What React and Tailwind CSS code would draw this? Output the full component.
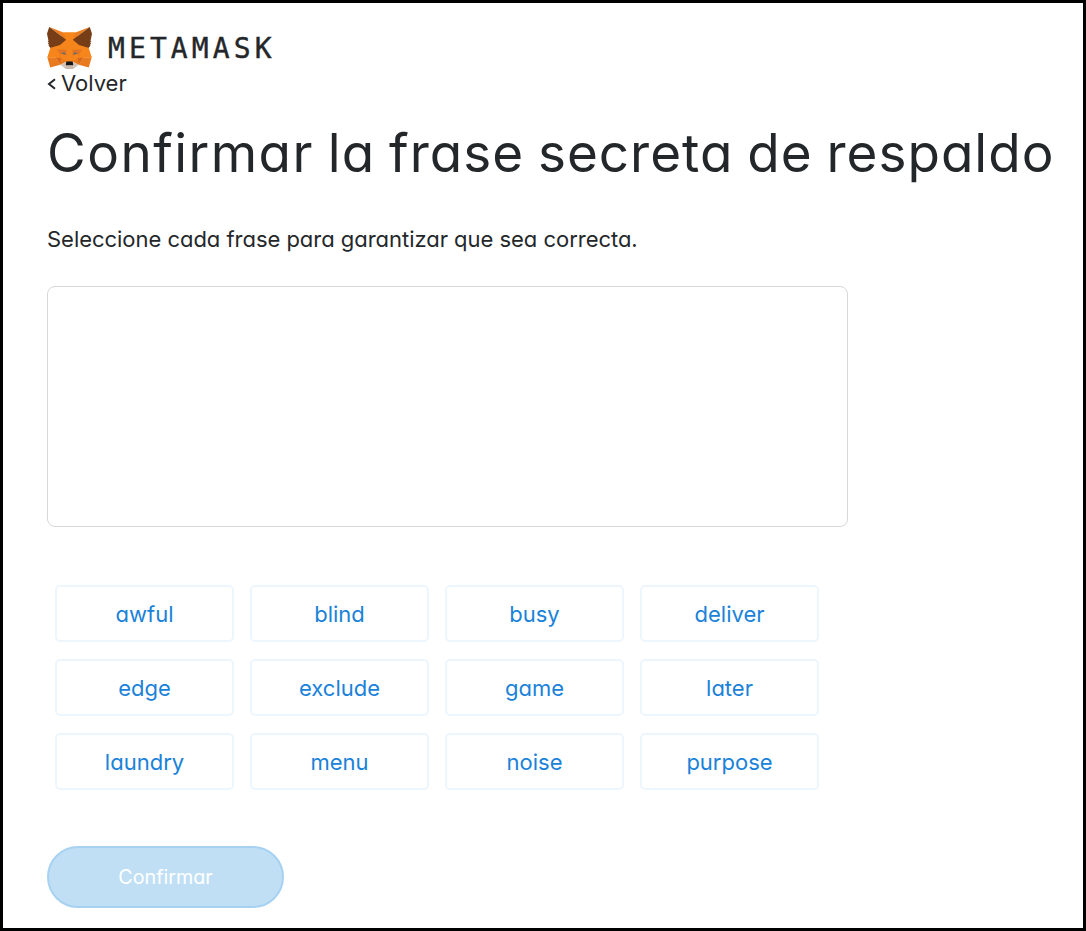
const WORDS = [
  "awful", "blind", "busy", "deliver",
  "edge", "exclude", "game", "later",
  "laundry", "menu", "noise", "purpose",
];

const FOX = [
  ["#ec7d1f", "274.1 35.5 174.6 109.4 193 65.8"],
  ["#ec7d1f", "44.4 35.5 143.1 110.1 125.6 65.8"],
  ["#e87a20", "238.3 206.8 211.8 247.4 268.5 263 284.8 207.7"],
  ["#e87a20", "33.9 207.7 50.1 263 106.8 247.4 80.3 206.8"],
  ["#f6851b", "103.6 138.2 87.8 162.1 144.1 164.6 142.1 104.1"],
  ["#f6851b", "214.9 138.2 175.9 103.4 174.6 164.6 230.8 162.1"],
  ["#e87a20", "106.8 247.4 140.6 230.9 111.4 208.1"],
  ["#e87a20", "177.9 230.9 211.8 247.4 207.1 208.1"],
  ["#d7c1b3", "211.8 247.4 177.9 230.9 180.6 253 180.3 262.3"],
  ["#d7c1b3", "106.8 247.4 138.3 262.3 138.1 253 140.6 230.9"],
  ["#d9691c", "106.8 247.4 111.6 206.8 80.3 207.7"],
  ["#d9691c", "207 206.8 211.8 247.4 238.3 207.7"],
  ["#df7327", "230.8 162.1 174.6 164.6 179.8 193.5 188.1 176.1 208.1 185.2"],
  ["#df7327", "110.6 185.2 130.6 176.1 138.8 193.5 144.1 164.6 87.8 162.1"],
  ["#e97b1f", "87.8 162.1 111.4 208.1 110.6 185.2"],
  ["#e97b1f", "208.1 185.2 207.1 208.1 230.8 162.1"],
  ["#ee7f1c", "144.1 164.6 138.8 193.5 145.4 227.6 146.9 182.7"],
  ["#ee7f1c", "174.6 164.6 171.9 182.6 173.1 227.6 179.8 193.5"],
  ["#f6851b", "179.8 193.5 173.1 227.6 177.9 230.9 207.1 208.1 208.1 185.2"],
  ["#f6851b", "110.6 185.2 111.4 208.1 140.6 230.9 145.4 227.6 138.8 193.5"],
  ["#c9b9ac", "180.3 262.3 180.6 253 178.1 250.8 140.4 250.8 138.1 253 138.3 262.3 106.8 247.4 117.8 256.4 140.1 271.9 178.4 271.9 200.8 256.4 211.8 247.4"],
  ["#161616", "177.9 230.9 173.1 227.6 145.4 227.6 140.6 230.9 138.1 253 140.4 250.8 178.1 250.8 180.6 253"],
  ["#763d16", "278.3 114.2 286.8 73.4 274.1 35.5 177.9 106.9 214.9 138.2 267.2 153.5 278.8 140 273.8 136.4 281.8 129.1 275.6 124.3 283.6 118.2"],
  ["#763d16", "31.8 73.4 40.3 114.2 34.9 118.2 42.9 124.3 36.8 129.1 44.8 136.4 39.8 140 51.3 153.5 103.6 138.2 140.6 106.9 44.4 35.5"],
  ["#f6851b", "267.2 153.5 214.9 138.2 230.8 162.1 207.1 208.1 238.3 207.7 284.8 207.7"],
  ["#f6851b", "103.6 138.2 51.3 153.5 33.9 207.7 80.3 207.7 111.4 208.1 87.8 162.1"],
  ["#f6851b", "174.6 164.6 177.9 106.9 193.1 65.8 125.6 65.8 140.6 106.9 144.1 164.6 145.3 182.8 145.4 227.6 173.1 227.6 173.3 182.8"],
  ["#6b6a68", "138.8 193.5 110.6 185.2 130.5 176.1"],
  ["#6b6a68", "179.7 193.5 188 176.1 208 185.2"],
];

function Fox() {
  return (
    <svg className="h-[42px] w-[45px] shrink-0" viewBox="31.8 35.5 255 236.4" preserveAspectRatio="none" aria-hidden="true">
      <path fill="#f6851b" d="M125.6 65.8h67.5L267 153.5l17.8 54.2-46.5-.5-26.5 40-34-16h-37l-34 16-26-40-46 .5 17-54.2z" />
      {FOX.map(([fill, points]) => (
        <polygon key={points} fill={fill} points={points} />
      ))}
    </svg>
  );
}

export default function App() {
  return (
    <main className="flex h-[931px] w-[1086px] flex-col items-start overflow-hidden border-[3px] border-black bg-white pt-6 pl-11 font-['Inter',sans-serif] text-[#24272a] [font-feature-settings:'cv11','ss03']">
      <header className="flex h-[42px] items-center">
        <Fox />
        <span className="ml-4 pt-0.5 font-['DejaVu_Sans_Mono',monospace] text-[28px] leading-none tracking-[4.1px] [-webkit-text-stroke:0.4px]">METAMASK</span>
      </header>

      <button className="flex h-[28px] items-center text-[22px] leading-7 whitespace-nowrap">
        <svg className="mt-px mr-[5px] h-[12px] w-[9px]" viewBox="0 0 9 12" fill="none" stroke="currentColor" strokeWidth="2" aria-hidden="true">
          <path d="M8 1.2 2 6l6 4.8" />
        </svg>
        <span>Volver</span>
      </button>

      <h1 className="mt-[21px] mb-px text-[53px] leading-[70px] font-normal whitespace-nowrap tracking-[1px] [word-spacing:-2px]">
        <span className="tracking-[1.45px]">Confirmar</span> la frase secreta de respaldo
      </h1>

      <p className="mt-[34px] text-[22px] leading-[32px] tracking-[-0.03px] whitespace-nowrap">Seleccione cada frase para garantizar que sea correcta.</p>

      <div className="mt-[31px] h-[241px] w-[801px] shrink-0 rounded-lg border-[1.5px] border-[#d5d7d9]" />

      <div className="mt-[58px] ml-2 grid grid-cols-4 gap-x-4 gap-y-[17px]">
        {WORDS.map((word) => (
          <button key={word} className="h-[57px] w-[179px] rounded-[5px] border-2 border-[#eef6fd] pt-0.5 text-center text-[22px] text-[#1a82d8]">
            {word}
          </button>
        ))}
      </div>

      <button className="mt-[56px] h-[62px] w-[237px] shrink-0 rounded-full border-2 border-[#a7d1f1] bg-[#c0dff5] pt-0.5 text-[19.7px] text-white">Confirmar</button>
    </main>
  );
}
